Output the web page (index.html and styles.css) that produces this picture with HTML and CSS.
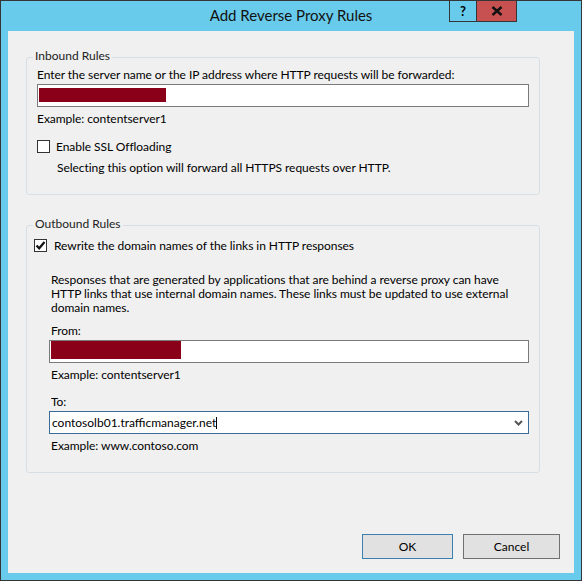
FILE: index.html
```html
<html lang="en">
<head>
    <meta charset="UTF-8">
    <title>Add Reverse Proxy Rules</title>
    <link rel="stylesheet" href="styles.css">
</head>
<body>
    <div class="window">
        <div class="titlebar">Add Reverse Proxy Rules</div>
        <div class="caption">
            <div class="cap-help">?</div>
            <div class="cap-close">
                <svg width="12" height="10" viewBox="0 0 12 10"><path d="M1.5 1 L10.5 9 M10.5 1 L1.5 9" stroke="#111" stroke-width="2.4"/></svg>
            </div>
        </div>
        <div class="client">
            <div class="group inbound">
                <div class="group-title">Inbound Rules</div>
                <div class="label">Enter the server name or the IP address where HTTP requests will be forwarded:</div>
                <div class="textbox tb-in"><span class="redact red-in"></span></div>
                <div class="hint">Example: contentserver1</div>
                <div class="check-row ssl">
                    <span class="checkbox"></span>
                    <span>Enable SSL Offloading</span>
                </div>
                <div class="note">Selecting this option will forward all HTTPS requests over HTTP.</div>
            </div>

            <div class="group outbound">
                <div class="group-title">Outbound Rules</div>
                <div class="check-row rewrite">
                    <span class="checkbox">
                        <svg width="11" height="11" viewBox="0 0 11 11"><path d="M1.5 5.5 L4.2 8.3 L9.5 2" fill="none" stroke="#111" stroke-width="2.2"/></svg>
                    </span>
                    <span>Rewrite the domain names of the links in HTTP responses</span>
                </div>
                <div class="sub">
                    <p class="para">Responses that are generated by applications that are behind a reverse proxy can have HTTP links that use internal domain names. These links must be updated to use external domain names.</p>
                    <div class="label from">From:</div>
                    <div class="textbox tb-from"><span class="redact red-from"></span></div>
                    <div class="hint">Example: contentserver1</div>
                    <div class="label to">To:</div>
                    <div class="combo">
                        <span class="combo-text">contosolb01.trafficmanager.net</span><span class="caret"></span>
                        <svg class="chevron" width="9" height="6" viewBox="0 0 9 6"><path d="M1 1 L4.5 4.5 L8 1" fill="none" stroke="#555" stroke-width="2"/></svg>
                    </div>
                    <div class="hint">Example: www.contoso.com</div>
                </div>
            </div>

            <div class="buttons">
                <button class="btn ok">OK</button>
                <button class="btn cancel">Cancel</button>
            </div>
        </div>
    </div>
</body>
</html>
```

FILE: styles.css
```css
*{
    box-sizing: border-box;
    margin: 0;
    padding: 0;
}
body{
    background-color: #69cbeb;
    font-family: "Segoe UI", Lato, "Liberation Sans", sans-serif;
    font-size: 12px;
    color: #000;
}
.window{
    position: relative;
    width: 582px;
    height: 581px;
    border: 1px solid #353535;
    background-color: #69cbeb;
    padding: 0 7px 7px 7px;
    display: flex;
    flex-direction: column;
}
.titlebar{
    height: 30px;
    line-height: 28px;
    text-align: center;
    font-size: 15px;
    color: #111;
}
.caption{
    position: absolute;
    top: -1px;
    right: 64px;
    display: flex;
}
.cap-help{
    width: 27px;
    height: 22px;
    border: 1px solid #353535;
    border-right: none;
    text-align: center;
    font-weight: bold;
    font-size: 13px;
    line-height: 20px;
}
.cap-close{
    width: 41px;
    height: 22px;
    background-color: #c75050;
    border: 1px solid #353535;
    display: flex;
    justify-content: center;
    align-items: center;
}
.client{
    flex: 1;
    background-color: #f0f0f0;
    padding: 26px 14px 14px 18px;
    display: flex;
    flex-direction: column;
}
.group{
    border: 1px solid #d6dfe6;
    border-radius: 3px;
    margin-right: 20px;
}
.group-title{
    width: fit-content;
    margin-top: -10px;
    padding: 0 2px;
    background-color: #f0f0f0;
    line-height: 15px;
    color: #222;
}
.inbound .group-title{
    margin-left: -4px;
}
.outbound .group-title{
    margin-left: -1px;
}
.label, .hint, .note, .check-row{
    line-height: 15px;
    letter-spacing: -0.05px;
}
.inbound{
    padding: 0 10px 19px 10px;
}
.inbound .label{
    margin-top: 4px;
}
.textbox{
    margin-top: 2px;
    height: 23px;
    background-color: #fff;
    border: 1px solid #7a7a7a;
}
.redact{
    display: block;
    background-color: #8a0018;
}
.tb-in{
    padding: 3px 1px 0 1px;
}
.red-in{
    width: 127px;
    height: 14px;
}
.tb-from{
    padding: 0 1px;
}
.red-from{
    width: 130px;
    height: 18px;
}
.hint{
    margin-top: 4px;
}
.check-row{
    display: flex;
    align-items: center;
    gap: 6px;
}
.ssl{
    margin-top: 13px;
}
.checkbox{
    width: 13px;
    height: 13px;
    border: 1px solid #333;
    background-color: #fff;
    display: flex;
    justify-content: center;
    align-items: center;
}
.note{
    margin-top: 6px;
    margin-left: 20px;
}
.outbound{
    margin-top: 30px;
    padding: 0 10px 19px 7px;
}
.rewrite{
    margin-top: 7px;
    gap: 7px;
}
.sub{
    margin-left: 15px;
}
.para{
    margin-top: 20px;
    padding-left: 2px;
    line-height: 14px;
    letter-spacing: -0.05px;
}
.sub .label{
    padding-left: 2px;
}
.sub .hint{
    padding-left: 2px;
}
.from{
    margin-top: 8px;
}
.to{
    margin-top: 12px;
}
.combo{
    margin-top: 2px;
    height: 23px;
    background-color: #fff;
    border: 1px solid #3b6b98;
    display: flex;
    align-items: center;
    padding-left: 2px;
    padding-right: 5px;
}
.caret{
    width: 1px;
    height: 12px;
    background-color: #000;
}
.chevron{
    margin-left: auto;
}
.buttons{
    margin-top: auto;
    display: flex;
    justify-content: flex-end;
    gap: 10px;
}
.btn{
    height: 25px;
    background-color: #e1e1e1;
    border: 1px solid #707070;
    font-family: inherit;
    font-size: 12px;
    color: #000;
}
.ok{
    width: 91px;
    border-color: #3c7fb1;
}
.cancel{
    width: 97px;
}
```
